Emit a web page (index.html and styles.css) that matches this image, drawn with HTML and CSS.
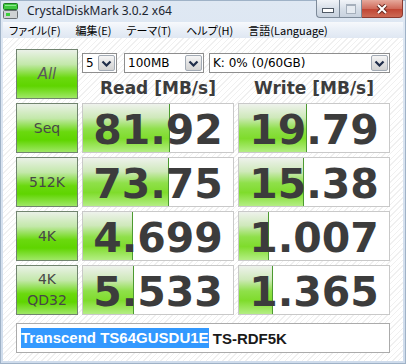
FILE: index.html
```html
<!DOCTYPE html>
<html lang="ja">
<head>
  <meta charset="UTF-8">
  <title>CrystalDiskMark 3.0.2 x64</title>
  <link rel="stylesheet" href="styles.css">
</head>
<body>
<div class="window">
  <div class="titlebar">
    <svg class="app-icon" width="15" height="16" viewBox="0 0 15 16">
      <rect x="0.5" y="0.5" width="14" height="6" rx="1" fill="#3fc83f" stroke="#1d7a22"/>
      <rect x="2" y="2" width="11" height="1" fill="#8fe88f"/>
      <rect x="0.5" y="7.5" width="14" height="8" rx="1" fill="#cfd2d4" stroke="#6b7075"/>
      <rect x="3" y="10" width="4" height="3" fill="#3ad03a"/>
    </svg>
    <span class="title">CrystalDiskMark 3.0.2 x64</span>
    <div class="caption-buttons">
      <span class="cbtn min"><i></i></span>
      <span class="cbtn max"><i></i></span>
      <span class="cbtn close">
        <svg width="12" height="10" viewBox="0 0 12 10">
          <path d="M2 1 L10 9 M10 1 L2 9" stroke="#6a2a22" stroke-width="4"/>
          <path d="M2 1 L10 9 M10 1 L2 9" stroke="#fff" stroke-width="2"/>
        </svg>
      </span>
    </div>
  </div>
  <div class="menubar">
    <span>ファイル(F)</span>
    <span>編集(E)</span>
    <span>テーマ(T)</span>
    <span>ヘルプ(H)</span>
    <span>言語(Language)</span>
  </div>
  <div class="client">
    <div class="grid">
      <div class="tile all">All</div>
      <div class="top">
        <div class="combos">
          <div class="combo count"><span class="combo-text">5</span><span class="arrow"><svg width="11" height="7" viewBox="0 0 11 7"><path d="M1.5 1.5 L5.5 5.5 L9.5 1.5" fill="none" stroke="#1f2d4a" stroke-width="2.2"/></svg></span></div>
          <div class="combo size"><span class="combo-text">100MB</span><span class="arrow"><svg width="11" height="7" viewBox="0 0 11 7"><path d="M1.5 1.5 L5.5 5.5 L9.5 1.5" fill="none" stroke="#1f2d4a" stroke-width="2.2"/></svg></span></div>
          <div class="combo drive"><span class="combo-text">K: 0% (0/60GB)</span><span class="arrow"><svg width="11" height="7" viewBox="0 0 11 7"><path d="M1.5 1.5 L5.5 5.5 L9.5 1.5" fill="none" stroke="#1f2d4a" stroke-width="2.2"/></svg></span></div>
        </div>
        <div class="heads">
          <span>Read [MB/s]</span>
          <span>Write [MB/s]</span>
        </div>
      </div>

      <div class="tile">Seq</div>
      <div class="val"><div class="bar" style="width:87px"></div><span>81.92</span></div>
      <div class="val"><div class="bar" style="width:68px"></div><span>19.79</span></div>

      <div class="tile">512K</div>
      <div class="val"><div class="bar" style="width:86px"></div><span>73.75</span></div>
      <div class="val"><div class="bar" style="width:65px"></div><span>15.38</span></div>

      <div class="tile">4K</div>
      <div class="val"><div class="bar" style="width:50px"></div><span>4.699</span></div>
      <div class="val"><div class="bar" style="width:30px"></div><span>1.007</span></div>

      <div class="tile two">4K<br>QD32</div>
      <div class="val"><div class="bar" style="width:51px"></div><span>5.533</span></div>
      <div class="val"><div class="bar" style="width:34px"></div><span>1.365</span></div>
    </div>
    <div class="comment"><span class="sel">Transcend TS64GUSDU1E</span>&nbsp;TS-RDF5K</div>
  </div>
</div>
</body>
</html>
```
FILE: styles.css
```css
body {
  margin: 0;
  background: #fff;
  font-family: "DejaVu Sans", sans-serif;
}
.window {
  width: 406px;
  height: 364px;
  box-sizing: border-box;
  padding: 0 3px 3px;
  display: flex;
  flex-direction: column;
  background: linear-gradient(#dfe8f3, #cfdcec);
  box-shadow: inset 0 0 0 1px #9fb2c7;
}
.titlebar {
  height: 22px;
  display: flex;
  align-items: flex-start;
}
.app-icon {
  margin-top: 3px;
  flex: none;
}
.title {
  margin-left: 9px;
  margin-top: 4px;
  font-family: "Noto Sans", sans-serif;
  font-size: 12px;
  line-height: 14px;
  color: #1c2530;
}
.caption-buttons {
  margin-left: auto;
  display: flex;
  height: 18px;
}
.cbtn {
  width: 23px;
  height: 18px;
  box-sizing: border-box;
  border: 1px solid #7d8a99;
  border-top: none;
  background: linear-gradient(#f1f4f8, #d5dde7 55%, #c8d2de);
  display: flex;
  align-items: center;
  justify-content: center;
}
.cbtn.min {
  border-radius: 0 0 0 4px;
  border-right: none;
}
.cbtn.min i {
  width: 10px;
  height: 3px;
  margin-top: 4px;
  background: #fff;
  border: 1px solid #505a66;
}
.cbtn.max i {
  width: 8px;
  height: 7px;
  border: 1px solid #a6b0bc;
  border-top-width: 2px;
  background: #e6ebf1;
}
.cbtn.close {
  width: 41px;
  border-color: #8c3a30;
  border-left: none;
  border-radius: 0 0 4px 0;
  background: linear-gradient(#e6a99c, #d06b5b 50%, #c14634 55%, #cc6a56);
}
.menubar {
  height: 16px;
  display: flex;
  align-items: center;
  background: linear-gradient(#f7f9fc, #e9eff7 50%, #dfe7f2);
  font-family: "Noto Sans CJK JP", sans-serif;
  font-size: 11px;
  font-feature-settings: "palt";
  color: #000;
  padding-left: 6px;
}
.menubar span {
  margin-right: 15px;
  line-height: 16px;
}
.client {
  flex: 1;
  padding: 11px 0 0 13px;
  background: repeating-linear-gradient(-45deg, #fff 0, #fff 3px, #f0f0f0 3px, #f0f0f0 4px);
}
.grid {
  display: grid;
  grid-template-columns: 62px 152px 152px;
  grid-auto-rows: 50px;
  gap: 4px;
}
.tile {
  box-sizing: border-box;
  border: 1px solid #71846f;
  display: flex;
  align-items: center;
  justify-content: center;
  text-align: center;
  font-size: 14px;
  line-height: 21px;
  color: #474747;
  background: linear-gradient(#eaf1e7, #c3e8aa 30%, #6ad90e 58%, #5fd500 75%, #9fe866);
}
.tile.all {
  font-style: italic;
  font-size: 15px;
  color: #5a5a5a;
}
.top {
  grid-column: span 2;
  display: flex;
  flex-direction: column;
}
.combos {
  display: flex;
  margin-top: 4px;
  height: 20px;
}
.combo {
  box-sizing: border-box;
  border: 1px solid #8e8e8e;
  background: #fff;
  display: flex;
  align-items: center;
  padding: 1px;
  font-size: 12px;
  color: #000;
}
.combo-text {
  flex: 1;
  padding-left: 2px;
}
.count { width: 35px; }
.size { width: 80px; margin-left: 7px; }
.drive { flex: 1; margin-left: 5px; }
.arrow {
  width: 17px;
  height: 16px;
  box-sizing: border-box;
  border: 1px solid #a3abb5;
  border-radius: 2px;
  background: linear-gradient(#f6f6f6, #e2e2e2 50%, #d3d3d3);
  display: flex;
  align-items: center;
  justify-content: center;
}
.heads {
  display: grid;
  grid-template-columns: 152px 152px;
  gap: 4px;
  margin-top: 5px;
  font-weight: bold;
  font-size: 17px;
  line-height: 20px;
  color: #3c3c3c;
  text-align: center;
}
.val {
  position: relative;
  box-sizing: border-box;
  border: 1px solid #c9c9c9;
  background: #fff;
  padding-top: 4px;
  text-align: center;
  font-weight: bold;
  font-size: 41px;
  line-height: 44px;
  color: #3c3c3c;
}
.bar {
  position: absolute;
  left: 0;
  top: 0;
  bottom: 0;
  box-sizing: border-box;
  border-right: 1px solid #4c9a30;
  background: linear-gradient(#eef2ec, #cfe9bb 28%, #8fe04a 52%, #7fdc2c 72%, #b4ee84);
}
.val span {
  position: relative;
}
.comment {
  margin-top: 8px;
  width: 374px;
  height: 30px;
  box-sizing: border-box;
  border: 1px solid #ababab;
  background: #fff;
  padding-left: 4px;
  display: flex;
  align-items: center;
  font-family: "Liberation Sans", sans-serif;
  font-weight: bold;
  font-size: 15px;
  color: #1a1a1a;
}
.sel {
  display: inline-block;
  line-height: 20px;
  background: #3399ff;
  color: #fff;
}
```
